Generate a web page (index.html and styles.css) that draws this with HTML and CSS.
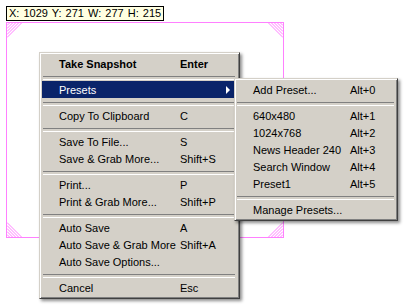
FILE: index.html
```html
<!DOCTYPE html>
<html lang="en">

<head>
    <meta charset="UTF-8">
    <title>Snapshot menu</title>
    <link rel="stylesheet" href="styles.css">
</head>

<body>
    <div class="stage">
        <div class="coords">X: 1029 Y: 271 W: 277 H: 215</div>

        <!-- capture region -->
        <div class="selection">
            <svg class="hatch tl" width="16" height="16" viewBox="0 0 16 16">
                <path d="M0 2.5L2.5 0M0 5.5L5.5 0M0 8.5L8.5 0M0 11.5L11.5 0M0 14.5L14.5 0" />
            </svg>
            <svg class="hatch tr" width="16" height="16" viewBox="0 0 16 16">
                <path d="M16 2.5L13.5 0M16 5.5L10.5 0M16 8.5L7.5 0M16 11.5L4.5 0M16 14.5L1.5 0" />
            </svg>
            <svg class="hatch bl" width="16" height="16" viewBox="0 0 16 16">
                <path d="M0 13.5L2.5 16M0 10.5L5.5 16M0 7.5L8.5 16M0 4.5L11.5 16M0 1.5L14.5 16" />
            </svg>
            <svg class="hatch br" width="16" height="16" viewBox="0 0 16 16">
                <path d="M16 13.5L13.5 16M16 10.5L10.5 16M16 7.5L7.5 16M16 4.5L4.5 16M16 1.5L1.5 16" />
            </svg>
        </div>

        <ul class="menu main">
            <li class="item bold"><span class="label">Take Snapshot</span><span class="key">Enter</span></li>
            <li class="sep"></li>
            <li class="item active"><span class="label">Presets</span><span class="arrow"></span></li>
            <li class="sep"></li>
            <li class="item"><span class="label">Copy To Clipboard</span><span class="key">C</span></li>
            <li class="sep"></li>
            <li class="item"><span class="label">Save To File...</span><span class="key">S</span></li>
            <li class="item"><span class="label">Save &amp; Grab More...</span><span class="key">Shift+S</span></li>
            <li class="sep"></li>
            <li class="item"><span class="label">Print...</span><span class="key">P</span></li>
            <li class="item"><span class="label">Print &amp; Grab More...</span><span class="key">Shift+P</span></li>
            <li class="sep"></li>
            <li class="item"><span class="label">Auto Save</span><span class="key">A</span></li>
            <li class="item"><span class="label">Auto Save &amp; Grab More</span><span class="key">Shift+A</span></li>
            <li class="item"><span class="label">Auto Save Options...</span></li>
            <li class="sep"></li>
            <li class="item"><span class="label">Cancel</span><span class="key">Esc</span></li>
        </ul>

        <ul class="menu sub">
            <li class="item"><span class="label">Add Preset...</span><span class="key">Alt+0</span></li>
            <li class="sep"></li>
            <li class="item"><span class="label">640x480</span><span class="key">Alt+1</span></li>
            <li class="item"><span class="label">1024x768</span><span class="key">Alt+2</span></li>
            <li class="item"><span class="label">News Header 240</span><span class="key">Alt+3</span></li>
            <li class="item"><span class="label">Search Window</span><span class="key">Alt+4</span></li>
            <li class="item"><span class="label">Preset1</span><span class="key">Alt+5</span></li>
            <li class="sep"></li>
            <li class="item"><span class="label">Manage Presets...</span></li>
        </ul>
    </div>
</body>

</html>
```

FILE: styles.css
```css
* {
    padding: 0;
    margin: 0;
    box-sizing: border-box;
}

body {
    background-color: #fff;
    font-family: "Liberation Sans", Arial, sans-serif;
    font-size: 11px;
    color: #000;
}

.stage {
    width: 406px;
    height: 306px;
    position: relative;
    overflow: hidden;
}

.coords {
    position: absolute;
    left: 6px;
    top: 6px;
    width: 158px;
    height: 15px;
    line-height: 13px;
    padding-left: 2px;
    border: 1px solid #000;
    background-color: #ffffe1;
    white-space: nowrap;
    word-spacing: 1px;
}

.selection {
    position: absolute;
    left: 6px;
    top: 22px;
    width: 278px;
    height: 216px;
    border: 1px solid #ff80ff;
}

.hatch {
    position: absolute;
    stroke: #ff80ff;
    stroke-width: 1;
    fill: none;
}

.hatch.tl {
    left: 0;
    top: 0;
}

.hatch.tr {
    right: 0;
    top: 0;
}

.hatch.bl {
    left: 0;
    bottom: 0;
}

.hatch.br {
    right: 0;
    bottom: 0;
}

ul {
    list-style: none;
}

.menu {
    position: absolute;
    background-color: #d4d0c8;
    border: 1px solid;
    border-color: #d4d0c8 #404040 #404040 #d4d0c8;
    padding: 2px;
    box-shadow: inset 1px 1px #fff, inset -1px -1px #808080, 2px 2px 3px rgba(0, 0, 0, 0.45);
}

.main {
    left: 39px;
    top: 52px;
    width: 201px;
}

.sub {
    left: 234px;
    top: 78px;
    width: 164px;
}

.item {
    display: flex;
    align-items: center;
    height: 17px;
    white-space: nowrap;
}

.main .item {
    padding-left: 17px;
}

.sub .item {
    padding-left: 16px;
}

.main .label {
    width: 121px;
}

.sub .label {
    width: 97px;
}

.bold {
    font-weight: bold;
}

.active {
    background-color: #0a246a;
    color: #fff;
}

.arrow {
    margin-left: auto;
    margin-right: 7px;
    width: 0;
    height: 0;
    border-top: 4px solid transparent;
    border-bottom: 4px solid transparent;
    border-left: 4px solid #fff;
}

.sep {
    height: 9px;
    padding-top: 4px;
}

.sep::before {
    content: "";
    display: block;
    border-top: 1px solid #808080;
    border-bottom: 1px solid #fff;
    height: 2px;
}

.main .sep::before {
    margin: 0 2px 0 1px;
}

.sub .sep::before {
    margin: 0 1px 0 0;
}
```
